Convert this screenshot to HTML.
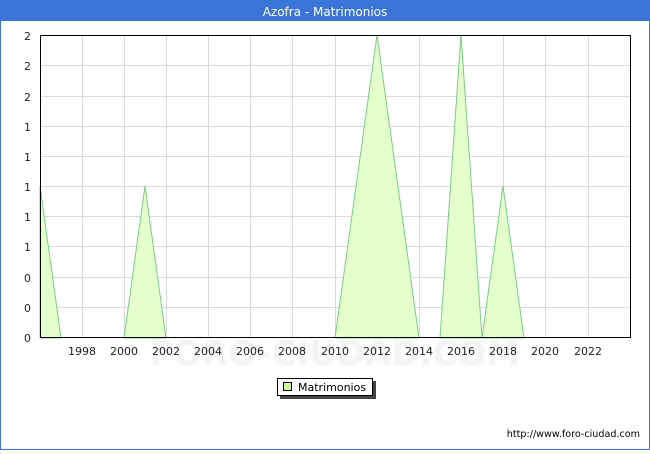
<!DOCTYPE html>
<html><head><style>
body{margin:0;width:650px;height:450px;overflow:hidden;font-family:"DejaVu Sans","Liberation Sans",sans-serif;}
</style></head><body>
<svg width="650" height="450" xmlns="http://www.w3.org/2000/svg" font-family="DejaVu Sans, Liberation Sans, sans-serif">
<rect x="0" y="0" width="650" height="450" fill="#fff"/>
<rect x="0.5" y="0.5" width="649" height="449" fill="none" stroke="#3a74d9"/>
<rect x="0" y="0" width="650" height="21" fill="#3a74d9"/>
<text x="325" y="16" fill="#fff" font-size="12" text-anchor="middle">Azofra - Matrimonios</text>
<text x="335" y="365" fill="#f4f4f4" font-size="34" text-anchor="middle" font-weight="bold">FORO-CIUDAD.COM</text>
<g stroke="#dadada" stroke-width="1">
<line x1="40" y1="65.5" x2="630" y2="65.5"/><line x1="40" y1="96.5" x2="630" y2="96.5"/><line x1="40" y1="126.5" x2="630" y2="126.5"/><line x1="40" y1="156.5" x2="630" y2="156.5"/><line x1="40" y1="186.5" x2="630" y2="186.5"/><line x1="40" y1="216.5" x2="630" y2="216.5"/><line x1="40" y1="246.5" x2="630" y2="246.5"/><line x1="40" y1="277.5" x2="630" y2="277.5"/><line x1="40" y1="307.5" x2="630" y2="307.5"/>
<line x1="82.5" y1="35" x2="82.5" y2="338"/><line x1="124.5" y1="35" x2="124.5" y2="338"/><line x1="166.5" y1="35" x2="166.5" y2="338"/><line x1="208.5" y1="35" x2="208.5" y2="338"/><line x1="250.5" y1="35" x2="250.5" y2="338"/><line x1="292.5" y1="35" x2="292.5" y2="338"/><line x1="335.5" y1="35" x2="335.5" y2="338"/><line x1="377.5" y1="35" x2="377.5" y2="338"/><line x1="419.5" y1="35" x2="419.5" y2="338"/><line x1="461.5" y1="35" x2="461.5" y2="338"/><line x1="503.5" y1="35" x2="503.5" y2="338"/><line x1="545.5" y1="35" x2="545.5" y2="338"/><line x1="588.5" y1="35" x2="588.5" y2="338"/>
</g>
<g fill="#e5ffcc" stroke="#7acc8a" stroke-width="1">
<polygon points="40,186 61,338 40,338"/>
<polygon points="124,338 145,186 166,338"/>
<polygon points="335,338 377,35 419,338"/>
<polygon points="440,338 461,35 482,338"/>
<polygon points="482,338 503,186 524,338"/>
</g>
<rect x="40.5" y="35.5" width="590" height="302" fill="none" stroke="#000"/>
<g font-size="11" fill="#222" text-anchor="end">
<text x="31" y="40">2</text><text x="31" y="70">2</text><text x="31" y="101">2</text><text x="31" y="131">1</text><text x="31" y="161">1</text><text x="31" y="191">1</text><text x="31" y="221">1</text><text x="31" y="251">1</text><text x="31" y="282">0</text><text x="31" y="312">0</text><text x="31" y="342">0</text>
</g>
<g font-size="11" fill="#222" text-anchor="middle">
<text x="82" y="355">1998</text><text x="124" y="355">2000</text><text x="166" y="355">2002</text><text x="208" y="355">2004</text><text x="250" y="355">2006</text><text x="292" y="355">2008</text><text x="335" y="355">2010</text><text x="377" y="355">2012</text><text x="419" y="355">2014</text><text x="461" y="355">2016</text><text x="503" y="355">2018</text><text x="545" y="355">2020</text><text x="588" y="355">2022</text>
</g>
<rect x="280" y="381" width="96" height="18" fill="#444"/>
<rect x="277.5" y="378.5" width="95" height="17" fill="#fff" stroke="#000"/>
<rect x="283.5" y="382.5" width="8" height="8" fill="#ccff99" stroke="#000"/>
<text x="298" y="391" font-size="11" fill="#000">Matrimonios</text>
<text x="640" y="437" font-size="9.6" fill="#000" text-anchor="end">http://www.foro-ciudad.com</text>
</svg>
</body></html>
